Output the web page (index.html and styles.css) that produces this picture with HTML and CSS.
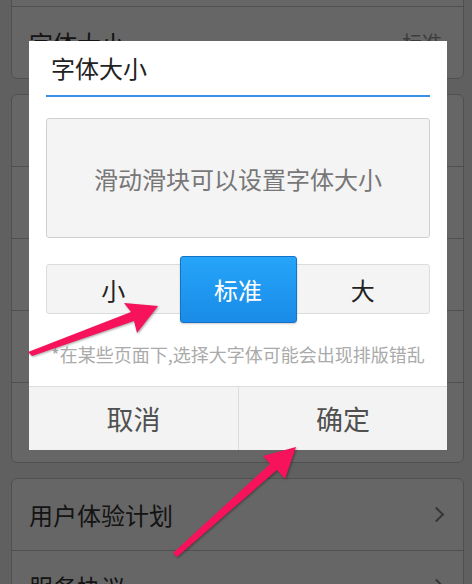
FILE: index.html
```html
<!DOCTYPE html>
<html lang="zh-CN">
<head>
	<meta charset="UTF-8">
	<title>设置</title>
	<link rel="stylesheet" href="styles.css">
</head>
<body>
	<div class="page">
		<div class="card first">
			<div class="row"><span class="label">夜间模式</span></div>
			<div class="row"><span class="label">字体大小</span><span class="value">标准</span></div>
		</div>
		<div class="card">
			<div class="row"><span class="label">清除缓存</span><i class="chev"></i></div>
			<div class="row"><span class="label">消息推送</span><i class="chev"></i></div>
			<div class="row"><span class="label">检查更新</span><i class="chev"></i></div>
			<div class="row"><span class="label">意见反馈</span><i class="chev"></i></div>
			<div class="row last"><span class="label">关于我们</span><i class="chev"></i></div>
		</div>
		<div class="card">
			<div class="row"><span class="label">用户体验计划</span><i class="chev"></i></div>
			<div class="row"><span class="label">服务协议</span><i class="chev"></i></div>
		</div>
	</div>

	<div class="mask"></div>

	<div class="dialog">
		<div class="dlg-title">字体大小</div>
		<div class="preview">滑动滑块可以设置字体大小</div>
		<div class="sizes">
			<div class="size">小</div>
			<div class="size on">标准</div>
			<div class="size">大</div>
		</div>
		<div class="note">*在某些页面下,选择大字体可能会出现排版错乱</div>
		<div class="footer">
			<div class="btn">取消</div>
			<div class="btn">确定</div>
		</div>
	</div>

	<!-- 标注箭头 -->
	<svg class="arrows" width="472" height="584" viewBox="0 0 472 584">
		<polygon points="28,352 131,312 124,303 158,306 137,333 134,321 32,356"/>
		<polygon points="173,553 270,464 263,456 296,447 285,479 277,470 177,557"/>
	</svg>
</body>
</html>
```

FILE: styles.css
```css
*{
	margin: 0;
	padding: 0;
	box-sizing: border-box;
}
html,body{
	width: 472px;
	height: 584px;
	overflow: hidden;
}
body{
	background: #efefef;
	font-family: "Noto Sans CJK SC", "Noto Sans", sans-serif;
	position: relative;
}
.page{
	padding: 0 8px 0 11px;
}
.card{
	background: #fff;
	border: 1px solid #c8c8c8;
	border-radius: 6px;
	margin-top: 15px;
}
.card.first{
	margin-top: -66px;
}
.row{
	height: 72px;
	display: flex;
	align-items: center;
	padding: 0 16px 0 17px;
	border-top: 1px solid #c8c8c8;
}
.row:first-child{
	height: 71px;
	border-top: 0;
}
.row.last{
	height: 80px;
}
.label{
	flex: 1;
	font-size: 24px;
	color: #333;
}
.value{
	font-size: 20px;
	color: #999;
	margin-right: 5px;
}
.chev{
	width: 11px;
	height: 11px;
	border-top: 2px solid #888;
	border-right: 2px solid #888;
	transform: rotate(45deg);
	margin-right: 5px;
}
.mask{
	position: absolute;
	left: 0;
	top: 0;
	right: 0;
	bottom: 0;
	background: rgba(0,0,0,.6);
}
.dialog{
	position: absolute;
	left: 29px;
	top: 41px;
	width: 418px;
	height: 409px;
	background: #fff;
	display: flex;
	flex-direction: column;
}
.dlg-title{
	margin: 0 17px;
	height: 56px;
	line-height: 54px;
	padding-left: 5px;
	font-size: 24px;
	color: #222;
	border-bottom: 2px solid #3990e6;
}
.preview{
	margin: 21px 17px 0;
	height: 120px;
	display: flex;
	align-items: center;
	justify-content: center;
	background: #f4f4f4;
	border: 1px solid #d0d0d0;
	border-radius: 3px;
	font-size: 24px;
	color: #777;
}
.sizes{
	margin: 26px 17px 0;
	height: 50px;
	display: grid;
	grid-template-columns: 1fr 117px 1fr;
	background: #f4f4f4;
	border: 1px solid #dcdcdc;
	border-radius: 3px;
}
.size{
	display: flex;
	align-items: center;
	justify-content: center;
	font-size: 24px;
	color: #222;
}
.size.on{
	margin: -9px 0 -10px;
	background: linear-gradient(#25a5f9, #1a8be8);
	border: 1px solid #1672c6;
	border-radius: 3px;
	color: #fff;
	box-shadow: 0 1px 2px rgba(0,0,0,.2);
}
.note{
	margin-top: 28px;
	text-align: center;
	font-size: 18px;
	line-height: 24px;
	color: #aaa;
}
.footer{
	margin-top: auto;
	height: 64px;
	display: grid;
	grid-template-columns: 1fr 1fr;
	background: #f3f3f3;
	border-top: 1px solid #dcdcdc;
}
.btn{
	display: flex;
	align-items: center;
	justify-content: center;
	font-size: 27px;
	color: #505050;
}
.btn+.btn{
	border-left: 1px solid #dcdcdc;
}
.arrows{
	position: absolute;
	left: 0;
	top: 0;
	pointer-events: none;
}
.arrows polygon{
	fill: #f6135c;
	filter: drop-shadow(1px 1px 1px rgba(0,0,0,.35));
}
```
